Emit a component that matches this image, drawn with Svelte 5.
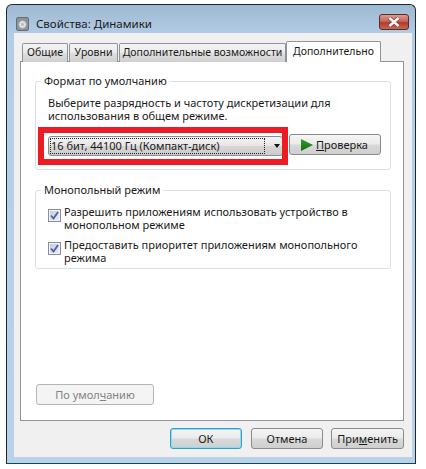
<script>
  const tabs = [
    { label: 'Общие', cls: 'w1' },
    { label: 'Уровни', cls: 'w2' },
    { label: 'Дополнительные возможности', cls: 'w3' }
  ];
</script>

<div class="window">
  <header class="titlebar">
    <svg class="appicon" width="13" height="14" viewBox="0 0 13 14">
      <rect x="0.5" y="0.5" width="12" height="13" rx="1.5" fill="#8b9298" stroke="#666d73"/>
      <circle cx="6.5" cy="7.5" r="4" fill="#dfe3e6" stroke="#9aa1a6"/>
      <circle cx="6.5" cy="7.5" r="1.4" fill="#b4babf"/>
    </svg>
    <span class="title">Свойства: Динамики</span>
    <button class="close" aria-label="Закрыть">
      <svg width="14" height="10" viewBox="0 0 14 10">
        <path d="M2.5 1 L11.5 9 M11.5 1 L2.5 9" stroke="#6b3a34" stroke-width="3.8"/>
        <path d="M2.5 1 L11.5 9 M11.5 1 L2.5 9" stroke="#f4f4f4" stroke-width="2.6"/>
      </svg>
    </button>
  </header>

  <div class="panel">
    <nav class="tabs">
      {#each tabs as tab}
        <div class="tab {tab.cls}">{tab.label}</div>
      {/each}
      <div class="tab active">Дополнительно</div>
    </nav>

    <div class="sheet">
      <fieldset class="group first">
        <legend>Формат по умолчанию</legend>
        <p class="desc">Выберите разрядность и частоту дискретизации для<br />использования в общем режиме.</p>
        <div class="format-row">
          <div class="combo">
            <span class="combo-value">16 бит, 44100 Гц (Компакт-диск)</span>
            <span class="arrow"></span>
          </div>
          <button class="btn test">
            <svg width="12" height="12" viewBox="0 0 12 12">
              <defs>
                <linearGradient id="play" x1="0" y1="0" x2="0" y2="1">
                  <stop offset="0" stop-color="#2f9a2f" />
                  <stop offset="1" stop-color="#156f15" />
                </linearGradient>
              </defs>
              <path d="M0 0 L12 6 L0 12 Z" fill="url(#play)"/>
            </svg>
            <span><u>П</u>роверка</span>
          </button>
        </div>
      </fieldset>

      <fieldset class="group second">
        <legend>Монопольный режим</legend>
        <div class="check">
          <span class="box"><svg width="9" height="9" viewBox="0 0 9 9"><path d="M1 4.5 L3.5 7.5 L8 1" fill="none" stroke="#4a60b0" stroke-width="1.8"/></svg></span>
          <span>Разрешить приложениям использовать устройство в<br />монопольном режиме</span>
        </div>
        <div class="check">
          <span class="box"><svg width="9" height="9" viewBox="0 0 9 9"><path d="M1 4.5 L3.5 7.5 L8 1" fill="none" stroke="#4a60b0" stroke-width="1.8"/></svg></span>
          <span>Предоставить приоритет приложениям монопольного<br />режима</span>
        </div>
      </fieldset>

      <div class="spacer"></div>
      <button class="btn defaults" disabled>По умол<u>ч</u>анию</button>
    </div>

    <footer class="actions">
      <button class="btn primary">ОК</button>
      <button class="btn action">Отмена</button>
      <button class="btn action">При<u>м</u>енить</button>
    </footer>
  </div>

  <div class="highlight"></div>
</div>

<style>
  :global(body) {
    background: #fff;
  }
  * {
    box-sizing: border-box;
  }
  .window {
    position: relative;
    width: 410px;
    height: 460px;
    margin: 4px 0 0 6px;
    border: 1px solid #1c2a30;
    border-bottom-color: #0d4a58;
    border-radius: 6px 6px 0 0;
    background: linear-gradient(180deg, #9db8d2 0, #b4cde6 30px, #b9d2ea 100%);
    font-family: "Noto Sans", "Open Sans", sans-serif;
    font-size: 11px;
    color: #1a1a1a;
    display: flex;
    flex-direction: column;
  }
  .titlebar {
    height: 28px;
    display: flex;
    align-items: flex-start;
    padding: 9px 6px 0 9px;
  }
  .appicon {
    flex: none;
    margin-top: 3px;
  }
  .title {
    margin-left: 7px;
    font-size: 11.5px;
    line-height: 18px;
    margin-top: 1px;
    color: #1a1a1a;
  }
  .close {
    margin: 0 0 0 auto;
    width: 30px;
    height: 16px;
    padding: 0;
    border: 1px solid #5e2a24;
    border-radius: 3px;
    background: linear-gradient(180deg, #dc9a8e 0, #c9655a 45%, #b03a2c 55%, #c26a58 100%);
    display: flex;
    align-items: center;
    justify-content: center;
  }
  .panel {
    flex: 1;
    margin: 0 3px 6px 7px;
    background: #f0f0f0;
    padding: 8px 8px 0 6px;
    display: flex;
    flex-direction: column;
  }
  .tabs {
    display: flex;
    align-items: flex-end;
    height: 21px;
    padding-left: 2px;
    gap: 1px;
    position: relative;
    z-index: 1;
    margin-bottom: -1px;
    font-size: 10.5px;
  }
  .tab {
    height: 19px;
    text-align: center;
    line-height: 17px;
    border: 1px solid #8e9499;
    border-bottom: none;
    border-radius: 2px 2px 0 0;
    background: linear-gradient(180deg, #f4f4f4 0, #ebebeb 45%, #dcdcdc 55%, #cfcfcf 100%);
    white-space: nowrap;
  }
  .w1 {
    width: 46px;
  }
  .w2 {
    width: 49px;
  }
  .w3 {
    width: 167px;
  }
  .tab.active {
    width: 95px;
    height: 21px;
    line-height: 19px;
    background: #fff;
    margin-left: -1px;
  }
  .sheet {
    height: 360px;
    background: #fff;
    border: 1px solid #8e9499;
    padding: 12px 12px 15px 14px;
    display: flex;
    flex-direction: column;
  }
  .group {
    margin: 0;
    border: 1px solid #d9e0e6;
    border-radius: 3px;
    min-width: 0;
  }
  legend {
    padding: 0 3px;
    margin-left: -7px;
    line-height: 14px;
  }
  .first {
    height: 96px;
    padding: 8px 8px 0 12px;
  }
  .second {
    height: 86px;
    margin-top: 13px;
    padding: 8px 8px 0 12px;
  }
  .desc {
    margin: 0;
    line-height: 13px;
  }
  .format-row {
    display: flex;
    align-items: flex-start;
    gap: 6px;
    margin-top: 12px;
  }
  .combo {
    width: 235px;
    height: 20px;
    margin-top: 2px;
    border: 1px solid #8b8b8b;
    border-radius: 3px;
    background: linear-gradient(180deg, #f4f4f4 0, #e6e6e6 48%, #d6d6d6 52%, #cccccc 100%);
    display: flex;
    align-items: center;
    padding: 1px;
  }
  .combo-value {
    flex: 1;
    height: 16px;
    line-height: 14px;
    border: 1px dotted #222;
    white-space: nowrap;
    overflow: hidden;
  }
  .arrow {
    flex: none;
    width: 0;
    height: 0;
    margin: 0 1px 0 9px;
    border-left: 3.5px solid transparent;
    border-right: 3.5px solid transparent;
    border-top: 4px solid #111;
  }
  .check {
    display: flex;
    gap: 3px;
    line-height: 13px;
  }
  .check + .check {
    margin-top: 7px;
  }
  .box {
    flex: none;
    width: 13px;
    height: 13px;
    margin-top: 4px;
    border: 1px solid #8a8e94;
    background: linear-gradient(135deg, #c3c9d6, #eef0f5);
    box-shadow: inset 0 0 0 1px #f2f3f6;
    display: flex;
    align-items: center;
    justify-content: center;
  }
  .btn {
    font: inherit;
    color: #1a1a1a;
    border: 1px solid #8b8b8b;
    border-radius: 3px;
    background: linear-gradient(180deg, #f4f4f4 0, #ebebeb 48%, #d9d9d9 52%, #cfcfcf 100%);
    padding: 0;
    height: 21px;
    line-height: 17px;
    white-space: nowrap;
  }
  .test {
    width: 92px;
    display: flex;
    align-items: center;
    justify-content: flex-start;
    padding-left: 11px;
    gap: 3px;
  }
  .spacer {
    flex: 1;
  }
  .defaults {
    width: 118px;
    margin-left: 1px;
    background: #f4f4f4;
    border-color: #b5b5b5;
    color: #838383;
  }
  .actions {
    display: flex;
    margin-top: 7px;
    padding-left: 150px;
  }
  .primary {
    width: 72px;
    border-color: #2f9fc4;
    box-shadow: inset 0 0 0 1px #8fdcf2;
  }
  .action {
    width: 73px;
    margin-left: 9px;
  }
  .action:last-child {
    margin-left: 8px;
  }
  .highlight {
    position: absolute;
    left: 31px;
    top: 122px;
    width: 250px;
    height: 38px;
    border: 6px solid #ed1c24;
    pointer-events: none;
  }
</style>
